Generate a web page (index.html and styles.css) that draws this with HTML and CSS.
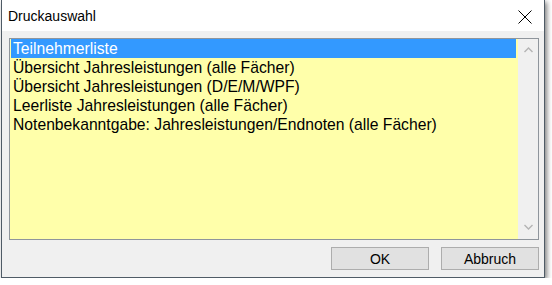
FILE: index.html
```html
<!DOCTYPE html>
<html lang="de">
<head>
<meta charset="utf-8">
<title>Druckauswahl</title>
<link rel="stylesheet" href="styles.css">
</head>
<body>
<div class="dialog">
  <div class="titlebar">
    <span class="title">Druckauswahl</span>
    <span class="close" aria-label="Schließen">
      <svg width="14" height="14" viewBox="0 0 14 14"><path d="M0.5 0.5 L13.5 13.5 M13.5 0.5 L0.5 13.5" stroke="#000" stroke-width="1" fill="none"/></svg>
    </span>
  </div>
  <div class="client">
    <div class="listbox">
      <ul class="items">
        <li class="item selected">Teilnehmerliste</li>
        <li class="item">Übersicht Jahresleistungen (alle Fächer)</li>
        <li class="item">Übersicht Jahresleistungen (D/E/M/WPF)</li>
        <li class="item">Leerliste Jahresleistungen (alle Fächer)</li>
        <li class="item">Notenbekanntgabe: Jahresleistungen/Endnoten (alle Fächer)</li>
      </ul>
      <div class="scrollbar">
        <svg class="arrow" width="9" height="6" viewBox="0 0 9 6"><path d="M0.5 5 L4.5 1 L8.5 5" stroke="#b4b4b4" stroke-width="1.4" fill="none"/></svg>
        <svg class="arrow" width="9" height="6" viewBox="0 0 9 6"><path d="M0.5 1 L4.5 5 L8.5 1" stroke="#b4b4b4" stroke-width="1.4" fill="none"/></svg>
      </div>
    </div>
    <div class="buttons">
      <button class="btn">OK</button>
      <button class="btn">Abbruch</button>
    </div>
  </div>
</div>
</body>
</html>
```

FILE: styles.css
```css
html, body {
  margin: 0;
  padding: 0;
  background: #ffffff;
}

.dialog {
  box-sizing: border-box;
  width: 544px;
  height: 278px;
  margin-left: 1px;
  border: 1px solid #4f5b66;
  border-top: none;
  box-shadow: 2px 2px 5px rgba(0, 0, 0, 0.5);
  display: flex;
  flex-direction: column;
  background: #f0f0f0;
}

.titlebar {
  height: 31px;
  background: #ffffff;
  display: flex;
  align-items: center;
  justify-content: space-between;
  padding: 0 12px 0 6px;
  box-sizing: border-box;
}

.title {
  font-family: "Liberation Sans", Arial, sans-serif;
  font-size: 14px;
  color: #000;
  padding-top: 1px;
}

.close {
  display: flex;
  width: 14px;
  height: 14px;
  margin-top: 2px;
}

.client {
  flex: 1;
  padding: 7px 5px 7px 7px;
  display: flex;
  flex-direction: column;
}

.listbox {
  height: 202px;
  box-sizing: border-box;
  border: 1px solid #8f959c;
  background: #ffffaa;
  display: flex;
}

.items {
  flex: 1;
  list-style: none;
  margin: 0;
  padding: 0 2px 0 1px;
}

.item {
  height: 19px;
  line-height: 19px;
  padding-left: 2px;
  font-family: "Liberation Sans", Arial, sans-serif;
  font-size: 15.7px;
  color: #000;
  white-space: nowrap;
}

.item.selected {
  background: #3399ff;
  color: #ffffff;
}

.scrollbar {
  width: 20px;
  background: #f0f0f0;
  display: flex;
  flex-direction: column;
  justify-content: space-between;
  align-items: center;
  padding: 8px 0 9px;
  box-sizing: border-box;
}

.arrow {
  display: block;
}

.buttons {
  display: flex;
  justify-content: flex-end;
  gap: 12px;
  margin-top: 7px;
}

.btn {
  box-sizing: border-box;
  width: 98px;
  height: 23px;
  border: 1px solid #adadad;
  background: #e1e1e1;
  font-family: "Liberation Sans", Arial, sans-serif;
  font-size: 14px;
  color: #000;
  padding: 0;
}
```
